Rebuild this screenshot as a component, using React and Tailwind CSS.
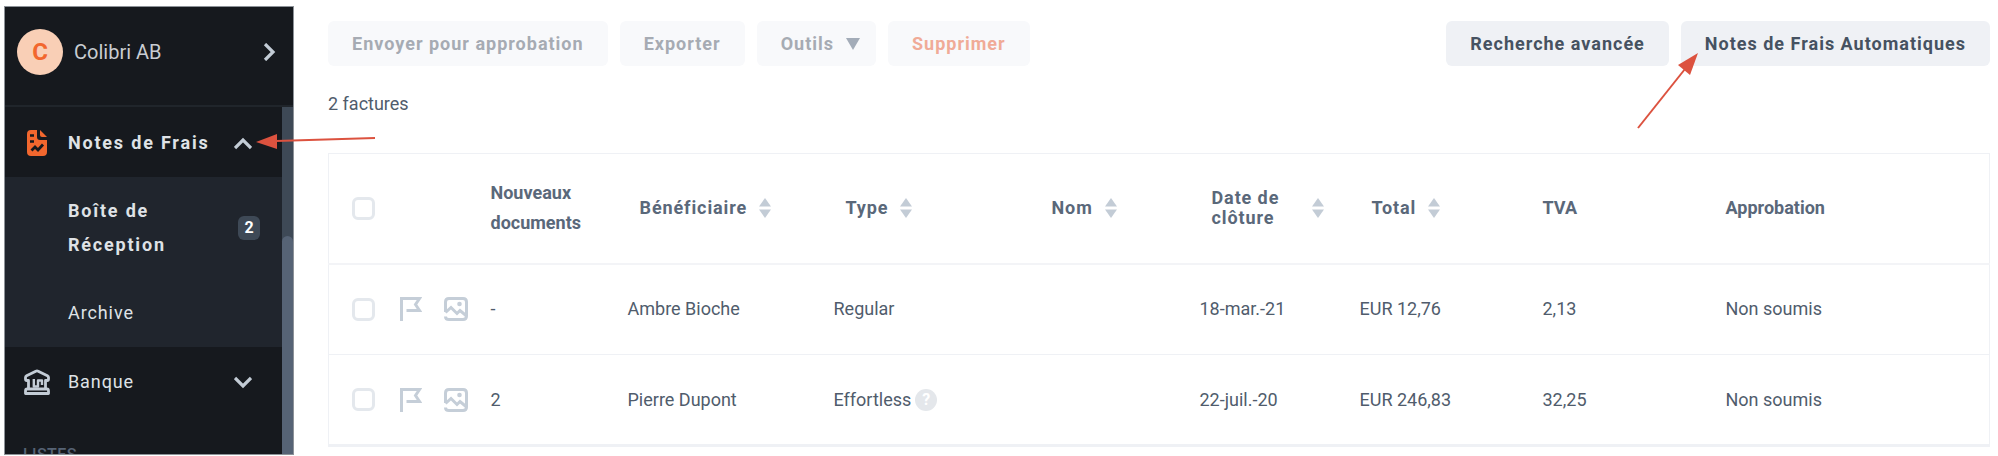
// Expense notes page: dark sidebar on the left, toolbar and invoice table on the right
import { useState } from 'react';

const rows = [
  { id: 1, docs: '-', name: 'Ambre Bioche', type: 'Regular', help: false, date: '18-mar.-21', total: 'EUR 12,76', vat: '2,13', status: 'Non soumis' },
  { id: 2, docs: '2', name: 'Pierre Dupont', type: 'Effortless', help: true, date: '22-juil.-20', total: 'EUR 246,83', vat: '32,25', status: 'Non soumis' },
];

const Chevron = ({ d }) => (
  <svg viewBox="0 0 18 18" className="h-[18px] w-[18px] shrink-0" fill="none" stroke="#c3ccd6" strokeWidth="3.2">
    <path d={d} />
  </svg>
);

const ReportIcon = () => (
  <svg viewBox="0 0 20 26" className="h-[26px] w-5" fill="#f2672e">
    <path d="M4 0H10V7Q10 10 13 10H20V22Q20 26 16 26H4Q0 26 0 22V4Q0 0 4 0Z" />
    <path d="M13 0L20 7H15Q13 7 13 5Z" />
    <path d="M3 5.5H7M3 11.5H7" stroke="#16191e" strokeWidth="2.6" />
    <path d="M4.500 20.500L8 17L11 20L16 14.500" stroke="#16191e" strokeWidth="2.8" fill="none" />
  </svg>
);

const BankIcon = () => (
  <svg viewBox="0 0 26 26" className="h-[26px] w-[26px]" fill="none" stroke="#c3ccd6" strokeWidth="2.8" strokeLinejoin="round">
    <path d="M4.500 20V11.500H2.800Q1.500 11.500 1.500 10V8.500Q1.500 7.400 2.600 6.800L11.800 2.200Q13 1.600 14.200 2.200L23.400 6.800Q24.500 7.400 24.500 8.500V10Q24.500 11.500 23.200 11.500H21.500V20" />
    <path d="M1.500 24.500V22Q1.500 20 3.200 20H22.800Q24.500 20 24.500 22V24.500Z" />
    <path d="M9.800 10V17.500H14V11.500H18V16" strokeWidth="2.4" />
  </svg>
);

const FlagIcon = () => (
  <svg viewBox="0 0 22 24" className="h-6 w-[22px]" fill="none" stroke="#c5ced8" strokeWidth="3">
    <path d="M1.500 24V1.500H19.500L15.500 7.500L19.500 13.500H6.500" />
  </svg>
);

const ImageIcon = () => (
  <svg viewBox="0 0 24 24" className="h-6 w-6" fill="none" stroke="#c5ced8" strokeWidth="3">
    <path d="M1.500 15V5Q1.500 1.500 5 1.500H19Q22.500 1.500 22.500 5V19Q22.500 22.500 19 22.500H5Q1.500 22.500 1.500 19.500" />
    <path d="M1.500 15.500L7 10.500L13 16.500L16 13.500L22 18.500" />
    <circle cx="15.500" cy="7" r="2.300" fill="#c5ced8" stroke="none" />
  </svg>
);

const SortIcon = () => (
  <svg viewBox="0 0 12 20" className="h-5 w-3 shrink-0" fill="#c3ccd6">
    <path d="M6 0L12 8.500H0Z" />
    <path d="M0 11.500H12L6 20Z" />
  </svg>
);

const Checkbox = ({ label }) => (
  <input
    type="checkbox"
    aria-label={label}
    className="block h-[23px] w-[23px] appearance-none rounded-md border-3 border-[#e4e8ed] bg-white checked:bg-[#c5ced8]"
  />
);

const SortHeader = ({ children }) => (
  <th className="pl-3 text-left">
    <button className="flex items-center gap-3 text-left font-bold leading-5 tracking-wider">
      {children}
      <SortIcon />
    </button>
  </th>
);

const Sidebar = () => {
  const [open, setOpen] = useState(true);

  return (
    <aside className="flex w-[290px] shrink-0 flex-col overflow-hidden border border-[#8d9298] bg-[#16191e] text-lg text-[#dfe2e6]">
      <button className="flex h-[100px] shrink-0 items-center border-b-2 border-[#20252b] px-3 pb-2">
        <span className="flex h-[46px] w-[46px] items-center justify-center rounded-full bg-[#f9cfb6] text-2xl font-bold text-[#f2672e]">C</span>
        <span className="ml-[11px] flex-1 text-left text-xl text-[#c9cdd2]">Colibri AB</span>
        <span className="mr-1"><Chevron d="M6 1L14 9L6 17" /></span>
      </button>

      <div className="flex min-h-0 flex-1">
        <nav className="min-w-0 flex-1">
          <button
            onClick={() => setOpen(!open)}
            className="flex h-[70px] w-full items-center pt-[2px] pr-[30px] pl-[22px] font-bold tracking-widest"
          >
            <ReportIcon />
            <span className="ml-[21px] flex-1 text-left">Notes de Frais</span>
            <Chevron d={open ? 'M1 14L9 6L17 14' : 'M1 5L9 13L17 5'} />
          </button>

          {open && (
            <div className="h-[170px] bg-[#20252d] pl-[63px]">
              <a href="#inbox" className="flex h-[102px] items-center justify-between pr-[22px] font-bold leading-[34px] tracking-widest">
                <span className="w-32">Boîte de Réception</span>
                <span className="flex h-6 w-[22px] items-center justify-center rounded-md bg-[#3e4956] text-base tracking-normal text-white">2</span>
              </a>
              <a href="#archive" className="flex h-[68px] items-center tracking-wider">Archive</a>
            </div>
          )}

          <button className="flex h-[70px] w-full items-center pr-[30px] pl-[19px] tracking-wider">
            <BankIcon />
            <span className="ml-[18px] flex-1 text-left">Banque</span>
            <Chevron d="M1 5L9 13L17 5" />
          </button>
          <p className="mt-[26px] pl-[18px] text-base font-medium tracking-wide text-[#566375]">LISTES</p>
        </nav>

        {/* Scrollbar */}
        <div className="w-[11px] bg-[#3e4956] pt-[129px]">
          <div className="h-full rounded-t-lg bg-[#566375]" />
        </div>
      </div>
    </aside>
  );
};

const Toolbar = () => (
  <div className="flex justify-between text-lg font-bold tracking-[1px]">
    <div className="flex gap-3 text-[#a6abb3]">
      <button className="h-[45px] rounded-md bg-[#f8f9fb] px-6">Envoyer pour approbation</button>
      <button className="h-[45px] rounded-md bg-[#f8f9fb] px-6">Exporter</button>
      <button className="flex h-[45px] items-center gap-3 rounded-md bg-[#f8f9fb] pr-4 pl-6">
        Outils
        <svg viewBox="0 0 14 14" className="h-[14px] w-[14px]" fill="#a3acb8"><path d="M0 1H14L7 13Z" /></svg>
      </button>
      <button className="h-[45px] rounded-md bg-[#f8f9fb] px-6 text-[#f0ab97]">Supprimer</button>
    </div>
    <div className="flex gap-3 text-[#465261]">
      <button className="h-[45px] rounded-md bg-[#eff1f5] px-6">Recherche avancée</button>
      <button className="h-[45px] rounded-md bg-[#eff1f5] px-6">Notes de Frais Automatiques</button>
    </div>
  </div>
);

const InvoiceTable = () => (
  <table className="mt-[35px] w-full table-fixed border border-b-3 border-[#eff1f5] text-lg text-[#505c6c]">
    <colgroup>
      <col className="w-[71px]" />
      <col className="w-[91px]" />
      <col className="w-[137px]" />
      <col className="w-[206px]" />
      <col className="w-[206px]" />
      <col className="w-[160px]" />
      <col className="w-[160px]" />
      <col className="w-[183px]" />
      <col className="w-[183px]" />
      <col />
    </colgroup>
    <thead className="text-[#5a687a]">
      <tr className="h-[110px] border-b-2 border-[#f3f4f7]">
        <th className="pl-[23px]"><Checkbox label="Tout sélectionner" /></th>
        <th />
        <th className="pr-8 text-left leading-[30px]">Nouveaux documents</th>
        <SortHeader>Bénéficiaire</SortHeader>
        <SortHeader>Type</SortHeader>
        <SortHeader>Nom</SortHeader>
        <SortHeader><span className="w-[88px]">Date de clôture</span></SortHeader>
        <SortHeader>Total</SortHeader>
        <th className="text-left">TVA</th>
        <th className="text-left">Approbation</th>
      </tr>
    </thead>
    <tbody>
      {rows.map((row) => (
        <tr key={row.id} className="h-[91px] border-b border-[#eff1f5] last:border-b-3">
          <td className="pl-[23px]"><Checkbox label={row.name} /></td>
          <td>
            <div className="flex gap-[22px]">
              <FlagIcon />
              <ImageIcon />
            </div>
          </td>
          <td>{row.docs}</td>
          <td>{row.name}</td>
          <td>
            <div className="flex items-center gap-1">
              {row.type}
              {row.help && (
                <span className="flex h-[22px] w-[22px] items-center justify-center rounded-full bg-[#e4e7eb] text-base font-bold text-white">?</span>
              )}
            </div>
          </td>
          <td />
          <td>{row.date}</td>
          <td>{row.total}</td>
          <td>{row.vat}</td>
          <td>{row.status}</td>
        </tr>
      ))}
    </tbody>
  </table>
);

// Red pointers laid over the page
const Arrows = () => (
  <>
    <svg viewBox="0 0 120 18" className="pointer-events-none absolute top-[132px] left-[256px] h-[18px] w-[120px]" fill="#dc523f">
      <path d="M20 9L119 6" stroke="#dc523f" strokeWidth="2" />
      <path d="M0 10L21 2V17Z" />
    </svg>
    <svg viewBox="0 0 62 76" className="pointer-events-none absolute top-[53px] right-[299px] h-[76px] w-[62px]" fill="#dc523f">
      <path d="M1 75L48 16" stroke="#dc523f" strokeWidth="2" />
      <path d="M61 0L41 12L53 22Z" />
    </svg>
  </>
);

const App = () => (
  <div className="relative flex h-screen overflow-hidden bg-white pt-[6px] pr-2 pb-px pl-1 font-[Roboto,sans-serif]">
    <Sidebar />
    <main className="min-w-0 flex-1 pt-[15px] pl-[34px]">
      <Toolbar />
      <p className="mt-6 text-lg text-[#505c6c]">2 factures</p>
      <InvoiceTable />
    </main>
    <Arrows />
  </div>
);

export default App;
